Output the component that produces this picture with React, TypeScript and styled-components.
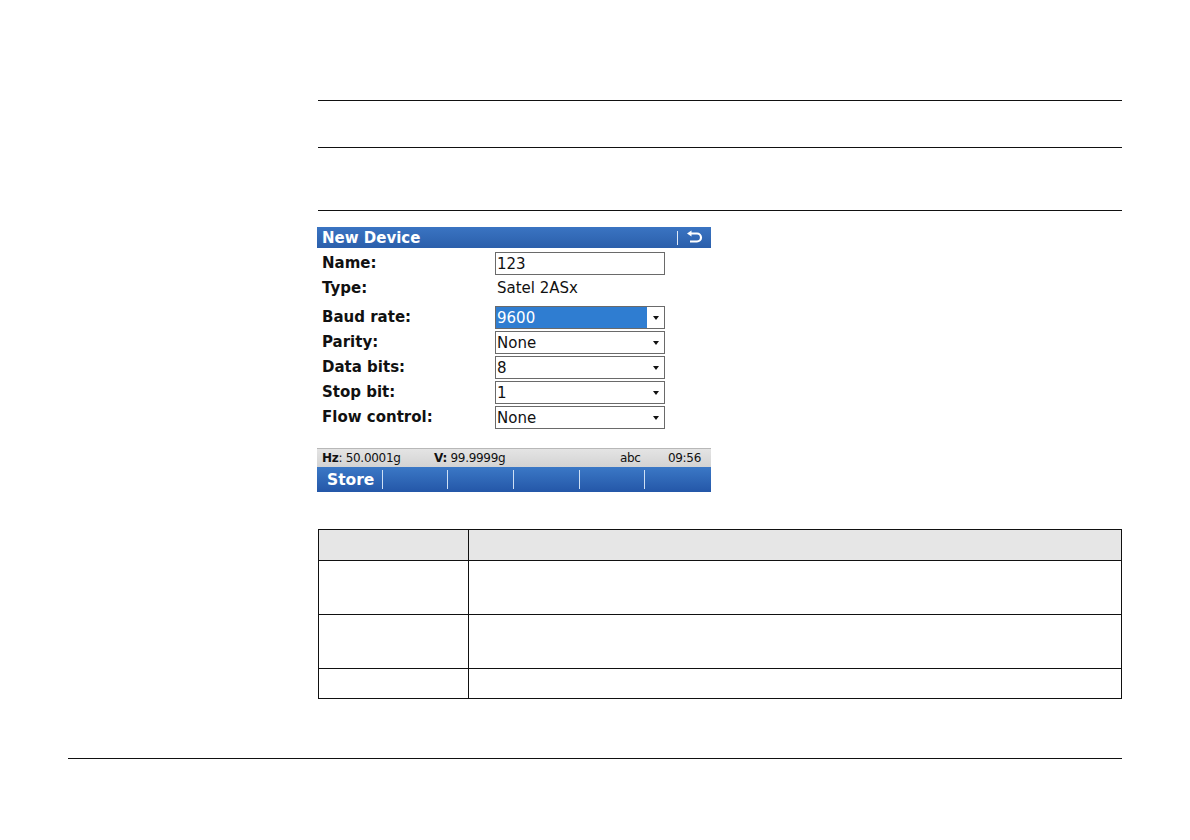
import React from "react";
import styled, { createGlobalStyle } from "styled-components";

const Global = createGlobalStyle`
  html, body { margin: 0; padding: 0; background: #fff; }
  body { font-family: "DejaVu Sans", "Liberation Sans", sans-serif; }
`;

const Page = styled.div`
  width: 1190px;
  height: 840px;
  position: relative;
  overflow: hidden;
  background: #fff;
  padding-top: 100px;
  box-sizing: border-box;
`;

const Column = styled.div`
  margin-left: 318px;
  width: 804px;
  display: flex;
  flex-direction: column;
`;

const Rule = styled.div<{ $gap: number }>`
  height: 0;
  border-top: 1.4px solid #111;
  margin-top: ${(p) => p.$gap}px;
`;

const Screen = styled.div`
  margin-top: 16px;
  margin-left: -1px;
  width: 394px;
  display: flex;
  flex-direction: column;
  font-family: "DejaVu Sans", sans-serif;
`;

const TitleBar = styled.div`
  height: 21px;
  background: linear-gradient(#3a74c2, #2b5fab);
  display: flex;
  align-items: center;
  padding-left: 5px;
  color: #fff;
  font-weight: bold;
  font-size: 15px;
`;

const Title = styled.span`
  flex: 1;
  line-height: 21px;
  padding-top: 1px;
`;

const TitleSep = styled.span`
  width: 1px;
  height: 14px;
  background: #dfe9f7;
  margin-right: 8px;
`;

const BackIcon = styled.svg`
  width: 17px;
  height: 15px;
  margin-right: 8px;
`;

const Form = styled.div`
  height: 200px;
  background: #fff;
  padding-top: 4px;
  box-sizing: border-box;
  display: flex;
  flex-direction: column;
`;

const Row = styled.div<{ $gapTop?: number }>`
  height: 25px;
  display: grid;
  grid-template-columns: 178px 170px;
  align-items: start;
  margin-top: ${(p) => p.$gapTop || 0}px;
`;

const Label = styled.span`
  padding-left: 5px;
  font-weight: bold;
  font-size: 15px;
  color: #111;
  line-height: 23px;
`;

const Value = styled.span`
  padding-left: 2px;
  font-size: 15px;
  color: #111;
  line-height: 23px;
`;

const Box = styled.div<{ $selected?: boolean }>`
  height: 23px;
  box-sizing: border-box;
  border: 1px solid #6a6a6a;
  display: flex;
  align-items: center;
  position: relative;
  font-size: 15px;
  color: #111;
  background: #fff;
`;

const BoxText = styled.span<{ $selected?: boolean }>`
  flex: 1;
  height: 100%;
  display: flex;
  align-items: center;
  padding-left: 1px;
  background: ${(p) => (p.$selected ? "#2f7dd1" : "transparent")};
  color: ${(p) => (p.$selected ? "#fff" : "#111")};
  margin: ${(p) => (p.$selected ? "0 17px 0 0" : "0")};
`;

const Arrow = styled.span`
  position: absolute;
  right: 5px;
  top: 9px;
  width: 0;
  height: 0;
  border-left: 3px solid transparent;
  border-right: 3px solid transparent;
  border-top: 4px solid #111;
`;

const StatusBar = styled.div`
  height: 19px;
  background: linear-gradient(#e4e4e4, #d3d3d3);
  border-top: 1px solid #b8b8b8;
  box-sizing: border-box;
  display: flex;
  align-items: center;
  font-size: 12px;
  color: #111;
  padding: 0 10px 0 5px;
`;

const StatItem = styled.span<{ $w?: number }>`
  width: ${(p) => (p.$w ? `${p.$w}px` : "auto")};
  white-space: nowrap;
  letter-spacing: -0.3px;
  b { font-weight: bold; }
`;

const Spacer = styled.span`
  flex: 1;
`;

const SoftKeys = styled.div`
  height: 25px;
  background: linear-gradient(#3b78c6, #2457a8);
  display: grid;
  grid-template-columns: repeat(6, 1fr);
`;

const SoftKey = styled.div<{ $last?: boolean }>`
  color: #fff;
  font-weight: bold;
  font-size: 15.5px;
  display: flex;
  align-items: center;
  padding-left: 10px;
  position: relative;
  &::after {
    content: "";
    display: ${(p) => (p.$last ? "none" : "block")};
    position: absolute;
    right: 0;
    top: 3px;
    bottom: 3px;
    width: 1px;
    background: #cfe0f5;
  }
`;

const Table = styled.div`
  margin-top: 37px;
  border: 1.5px solid #111;
  display: grid;
  grid-template-columns: 149px 1fr;
`;

const Cell = styled.div<{ $h: number; $head?: boolean; $first?: boolean; $top?: boolean }>`
  height: ${(p) => p.$h}px;
  background: ${(p) => (p.$head ? "#e6e6e6" : "#fff")};
  border-top: ${(p) => (p.$top ? "none" : "1.5px solid #111")};
  border-left: ${(p) => (p.$first ? "none" : "1.5px solid #111")};
`;

const FooterRule = styled.div`
  position: absolute;
  left: 68px;
  top: 758px;
  width: 1054px;
  border-top: 1.5px solid #111;
`;

const fields = [
  { label: "Baud rate:", value: "9600", selected: true },
  { label: "Parity:", value: "None" },
  { label: "Data bits:", value: "8" },
  { label: "Stop bit:", value: "1" },
  { label: "Flow control:", value: "None" },
];

const rows = [
  { h: 30, head: true },
  { h: 53 },
  { h: 53 },
  { h: 29 },
];

export default function App() {
  return (
    <Page>
      <Global />
      <Column>
        <Rule $gap={0} />
        <Rule $gap={46} />
        <Rule $gap={62} />
        <Screen>
          <TitleBar>
            <Title>New Device</Title>
            <TitleSep />
            <BackIcon viewBox="0 0 17 15" fill="none">
              <path d="M3.5 3.5 H11 a4 4 0 0 1 0 8 H4" stroke="#fff" strokeWidth="2.2" />
              <path d="M1 3.5 L5.5 0.5 L5.5 6.5 Z" fill="#fff" />
            </BackIcon>
          </TitleBar>
          <Form>
            <Row>
              <Label>Name:</Label>
              <Box>
                <BoxText>123</BoxText>
              </Box>
            </Row>
            <Row>
              <Label>Type:</Label>
              <Value>Satel 2ASx</Value>
            </Row>
            {fields.map((f, i) => (
              <Row key={f.label} $gapTop={i === 0 ? 4 : 0}>
                <Label>{f.label}</Label>
                <Box>
                  <BoxText $selected={f.selected}>{f.value}</BoxText>
                  <Arrow />
                </Box>
              </Row>
            ))}
          </Form>
          <StatusBar>
            <StatItem $w={112}>
              <b>Hz</b>: 50.0001g
            </StatItem>
            <StatItem>
              <b>V:</b> 99.9999g
            </StatItem>
            <Spacer />
            <StatItem $w={48}>abc</StatItem>
            <StatItem>09:56</StatItem>
          </StatusBar>
          <SoftKeys>
            <SoftKey>Store</SoftKey>
            <SoftKey />
            <SoftKey />
            <SoftKey />
            <SoftKey />
            <SoftKey $last />
          </SoftKeys>
        </Screen>
        <Table>
          {rows.map((r, i) => (
            <React.Fragment key={i}>
              <Cell $h={r.h} $head={r.head} $first $top={i === 0} />
              <Cell $h={r.h} $head={r.head} $top={i === 0} />
            </React.Fragment>
          ))}
        </Table>
      </Column>
      <FooterRule />
    </Page>
  );
}
